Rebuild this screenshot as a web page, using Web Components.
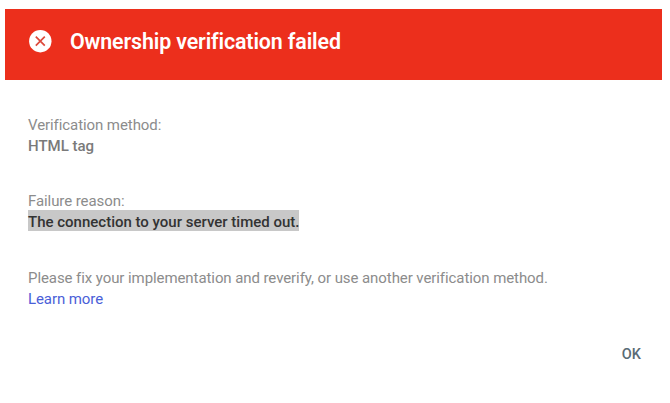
<!DOCTYPE html>
<html lang="en">
<head>
<meta charset="utf-8">
<title>Ownership verification</title>
<style>
body {
	margin: 0;
	background: #fff;
	font-family: Roboto, "Liberation Sans", sans-serif;
}
</style>
</head>
<body>
<verification-dialog>
	<dialog-header slot="header">Ownership verification failed</dialog-header>
	<dialog-field label="Verification method:">HTML tag</dialog-field>
	<dialog-field label="Failure reason:" highlighted>The connection to your server timed out.</dialog-field>
	<dialog-help link="Learn more">Please fix your implementation and reverify, or use another verification method.</dialog-help>
	<dialog-button slot="actions">OK</dialog-button>
</verification-dialog>

<script>
const define = (name, markup, setup) => {
	const template = document.createElement('template');
	template.innerHTML = markup;

	window.customElements.define(name, class extends HTMLElement {
		connectedCallback() {
			if (this.shadowRoot) {
				return;
			}

			const shadowRoot = this.attachShadow({ mode: 'open' });
			shadowRoot.appendChild(template.content.cloneNode(true));

			if (setup) {
				setup(this, shadowRoot);
			}
		}
	});
};

define('verification-dialog', `
<style>
:host {
	display: flex;
	flex-direction: column;
	box-sizing: border-box;
	height: 403px;
	padding: 9px 8px 0 5px;
}

.body {
	display: flex;
	flex-direction: column;
	gap: 34px;
	padding: 33px 23px 0;
}

.actions {
	display: flex;
	justify-content: flex-end;
	padding: 36px 21px 0 0;
}
</style>
<slot name="header"></slot>
<div class="body"><slot></slot></div>
<div class="actions"><slot name="actions"></slot></div>
`);

define('dialog-header', `
<style>
:host {
	display: flex;
	align-items: center;
	gap: 18px;
	box-sizing: border-box;
	height: 71px;
	padding: 0 23px 7px;
	background: #ec2f1c;
	color: #fff;
	font-size: 21.4px;
	font-weight: 600;
	letter-spacing: -0.13px;
}

svg {
	width: 24px;
	height: 24px;
}
</style>
<svg viewBox="0 0 24 24">
	<circle cx="12.3" cy="12.2" r="11.2" fill="#fff"/>
	<path d="M7.8 7.7l9 9M16.8 7.7l-9 9" stroke="#dc4a3c" stroke-width="1.7"/>
</svg>
<span><slot></slot></span>
`);

define('dialog-field', `
<style>
:host {
	display: block;
	color: #7a7a7a;
	font-size: 15px;
	line-height: 17px;
}

.label {
	padding-top: 4px;
	color: #8c8c8c;
	letter-spacing: -0.08px;
}

.value {
	display: block;
	width: fit-content;
	padding-top: 4px;
	font-weight: 500;
}

:host([highlighted]) .value {
	background: #c8c8c8;
	color: #333;
}
</style>
<div class="label"></div>
<span class="value"><slot></slot></span>
`, (host, root) => {
	root.querySelector('.label').textContent = host.getAttribute('label');
});

define('dialog-help', `
<style>
:host {
	display: block;
	padding-top: 1px;
	color: #8c8c8c;
	font-size: 15px;
	letter-spacing: -0.08px;
	line-height: 17px;
}

div {
	padding-top: 4px;
}

a {
	display: block;
	width: fit-content;
	padding-top: 4px;
	color: #4a60d8;
	text-decoration: none;
}
</style>
<div><slot></slot></div>
<a href="#"></a>
`, (host, root) => {
	root.querySelector('a').textContent = host.getAttribute('link');
});

define('dialog-button', `
<style>
:host {
	display: block;
}

button {
	padding: 0;
	border: 0;
	background: none;
	color: #5a6b75;
	font: 500 14.5px/20px Roboto, "Liberation Sans", sans-serif;
}
</style>
<button type="button"><slot></slot></button>
`);
</script>
</body>
</html>
